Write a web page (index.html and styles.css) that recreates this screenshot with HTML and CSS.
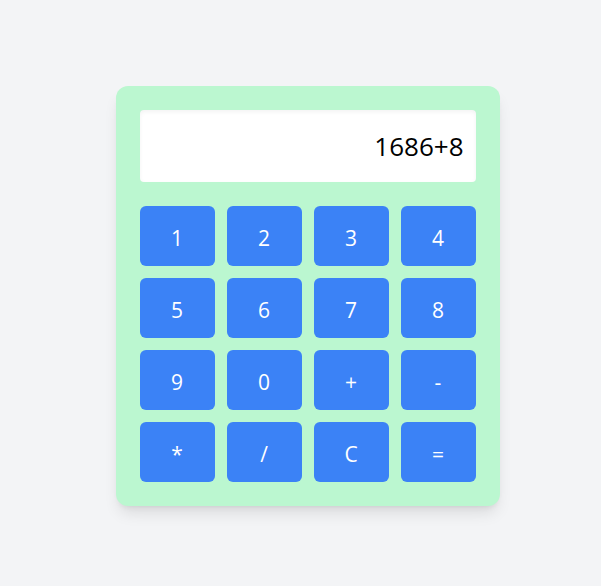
FILE: index.html
```html
<!DOCTYPE html>
<html>
<head>
<meta charset="utf-8">
<link rel="stylesheet" href="styles.css">
</head>
<body>
<div class="page">
  <div class="calc">
    <div class="display">1686+8</div>
    <div class="keys">
      <button class="key">1</button>
      <button class="key">2</button>
      <button class="key">3</button>
      <button class="key">4</button>
      <button class="key">5</button>
      <button class="key">6</button>
      <button class="key">7</button>
      <button class="key">8</button>
      <button class="key">9</button>
      <button class="key">0</button>
      <button class="key">+</button>
      <button class="key">-</button>
      <button class="key">*</button>
      <button class="key">/</button>
      <button class="key">C</button>
      <button class="key">=</button>
    </div>
  </div>
</div>
</body>
</html>
```
FILE: styles.css
```css
html, body {
  margin: 0;
  padding: 0;
  background: #f3f4f6;
  font-family: "Open Sans", "Noto Sans", sans-serif;
}
.page {
  width: 601px;
  height: 586px;
  box-sizing: border-box;
  padding: 6px 0 0 14px;
  display: flex;
  justify-content: center;
  align-items: center;
}
.calc {
  width: 336px;
  padding: 24px;
  background: #bbf7d0;
  border-radius: 12px;
  box-shadow: 0 10px 15px -3px rgba(0,0,0,0.1), 0 4px 6px -4px rgba(0,0,0,0.1);
}
.display {
  height: 72px;
  box-sizing: border-box;
  background: #fff;
  border-radius: 4px;
  box-shadow: inset 0 2px 4px 0 rgba(0,0,0,0.05);
  display: flex;
  align-items: center;
  justify-content: flex-end;
  padding: 0 12px;
  font-size: 26px;
  color: #000;
  margin-bottom: 24px;
}
.keys {
  display: grid;
  grid-template-columns: repeat(4, 75px);
  grid-auto-rows: 60px;
  gap: 12px;
}
.key {
  border: none;
  margin: 0;
  padding: 3px 0 0;
  background: #3b82f6;
  color: #fff;
  border-radius: 6px;
  font-family: inherit;
  font-size: 21px;
}
```
